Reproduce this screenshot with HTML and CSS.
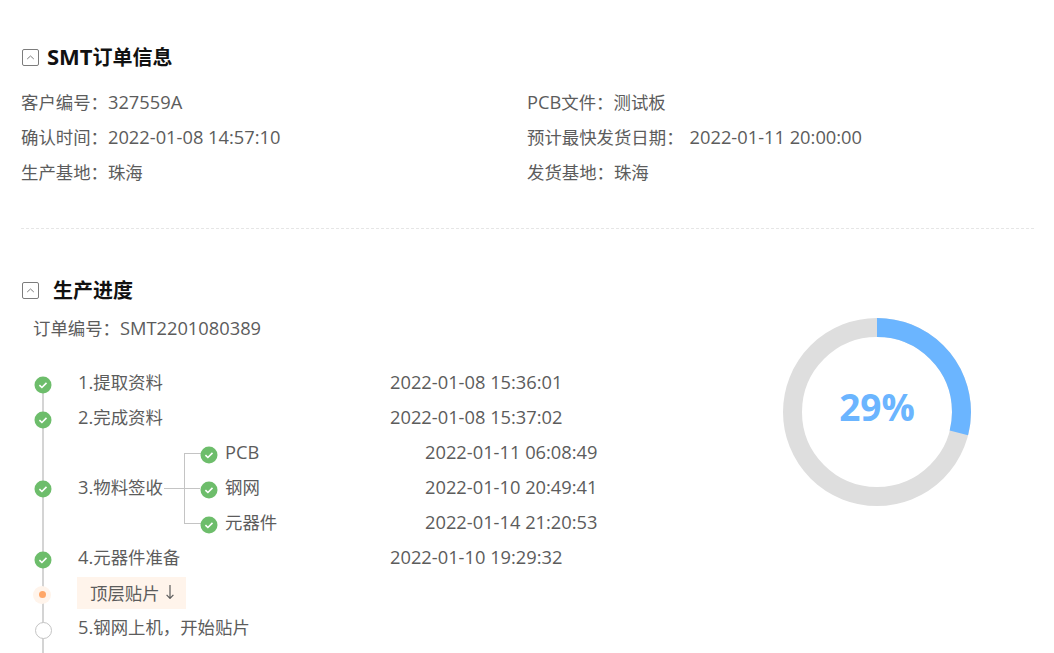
FILE: index.html
```html
<!DOCTYPE html>
<html lang="zh-CN">
<head>
<meta charset="utf-8">
<title>SMT订单信息</title>
<link rel="stylesheet" href="styles.css">
</head>
<body>
<main class="page">
  <section class="info">
    <h2 class="heading">
      <svg class="toggle" viewBox="0 0 17 17"><rect x=".5" y=".5" width="16" height="16" rx="1.5"/><path d="M5.2 10 8.5 7l3.3 3"/></svg>
      <span><span class="head-latin">SMT</span>订单信息</span>
    </h2>
    <div class="info-grid">
      <div class="field"><span class="key">客户编号：</span><span class="num">327559A</span></div>
      <div class="field"><span class="key"><span class="num">PCB</span>文件：</span>测试板</div>
      <div class="field"><span class="key">确认时间：</span><span class="num">2022-01-08 14:57:10</span></div>
      <div class="field"><span class="key wide">预计最快发货日期：</span><span class="num">2022-01-11 20:00:00</span></div>
      <div class="field"><span class="key">生产基地：</span>珠海</div>
      <div class="field"><span class="key">发货基地：</span>珠海</div>
    </div>
  </section>
  <hr class="divider">
  <section class="progress">
    <h2 class="heading heading-gap">
      <svg class="toggle" viewBox="0 0 17 17"><rect x=".5" y=".5" width="16" height="16" rx="1.5"/><path d="M5.2 10 8.5 7l3.3 3"/></svg>
      <span>生产进度</span>
    </h2>
    <div class="order-no">订单编号：<span class="num">SMT2201080389</span></div>
    <div class="body">
      <div class="timeline">
        <div class="row"><svg class="dot" viewBox="0 0 18 18"><circle cx="9" cy="9" r="8.5"/><path d="M5.4 9.2l2.5 2.3 4.6-4.6"/></svg><span class="label"><span class="num">1.</span>提取资料</span><span class="time num">2022-01-08 15:36:01</span></div>
        <div class="row"><svg class="dot" viewBox="0 0 18 18"><circle cx="9" cy="9" r="8.5"/><path d="M5.4 9.2l2.5 2.3 4.6-4.6"/></svg><span class="label"><span class="num">2.</span>完成资料</span><span class="time num">2022-01-08 15:37:02</span></div>
        <div class="group">
          <svg class="dot" viewBox="0 0 18 18"><circle cx="9" cy="9" r="8.5"/><path d="M5.4 9.2l2.5 2.3 4.6-4.6"/></svg>
          <span class="label"><span class="num">3.</span>物料签收</span>
          <div class="subs">
            <div class="sub"><svg class="dot" viewBox="0 0 18 18"><circle cx="9" cy="9" r="8.5"/><path d="M5.4 9.2l2.5 2.3 4.6-4.6"/></svg><span class="sub-label num">PCB</span><span class="time num">2022-01-11 06:08:49</span></div>
            <div class="sub"><svg class="dot" viewBox="0 0 18 18"><circle cx="9" cy="9" r="8.5"/><path d="M5.4 9.2l2.5 2.3 4.6-4.6"/></svg><span class="sub-label cjk">钢网</span><span class="time num">2022-01-10 20:49:41</span></div>
            <div class="sub"><svg class="dot" viewBox="0 0 18 18"><circle cx="9" cy="9" r="8.5"/><path d="M5.4 9.2l2.5 2.3 4.6-4.6"/></svg><span class="sub-label cjk">元器件</span><span class="time num">2022-01-14 21:20:53</span></div>
          </div>
        </div>
        <div class="row"><svg class="dot" viewBox="0 0 18 18"><circle cx="9" cy="9" r="8.5"/><path d="M5.4 9.2l2.5 2.3 4.6-4.6"/></svg><span class="label"><span class="num">4.</span>元器件准备</span><span class="time num">2022-01-10 19:29:32</span></div>
        <div class="row"><span class="current"></span><span class="tag">顶层贴片<svg class="arrow" viewBox="0 0 8 14"><path d="M4 0v13.4M.6 9.8 4 13.4l3.4-3.6"/></svg></span></div>
        <div class="row"><span class="pending"></span><span class="label"><span class="num">5.</span>钢网上机，开始贴片</span></div>
        <div class="row"></div>
      </div>
      <div class="ring">
        <svg viewBox="0 0 188 188"><circle class="ring-track" cx="94" cy="94" r="84.5"/><circle class="ring-value" cx="94" cy="94" r="84.5" pathLength="100" stroke-dasharray="29 71" transform="rotate(-90 94 94)"/></svg>
        <span class="ring-text">29%</span>
      </div>
    </div>
  </section>
</main>
</body>
</html>
```
FILE: styles.css
```css
* { box-sizing: border-box; }
html, body { margin: 0; height: 653px; overflow: hidden; background: #fff; }
body {
  font-family: "Open Sans", "Noto Sans CJK SC", sans-serif;
  font-size: 17.4px;
  color: #5c5c5c;
}
.num { font-size: 18.3px; line-height: 1; }
.head-latin { font-size: 22px; line-height: 1; }
.page { padding: 40px 20px 0 21px; }
.heading {
  display: flex;
  align-items: center;
  gap: 8px;
  margin: 0;
  height: 35px;
  font-size: 20px;
  font-weight: 700;
  color: #111;
}
.heading > span { margin-bottom: 2px; }
.heading-gap { gap: 14px; }
.toggle { width: 17px; height: 17px; margin-left: 1px; flex: none; fill: none; stroke: #7c7c7c; stroke-width: 1; }
.info-grid {
  display: grid;
  grid-template-columns: 506px 1fr;
  margin-top: 10px;
}
.field { height: 35px; line-height: 35px; white-space: nowrap; }
.key.wide { margin-right: 6px; }
.divider {
  margin: 38px 0 0;
  border: 0;
  border-top: 1px dashed #e6e6e6;
}
.progress { padding-top: 44px; }
.order-no { height: 35px; line-height: 33px; padding-left: 12px; margin-top: 4px; }
.body { display: flex; position: relative; margin-top: 16px; }
.timeline { position: relative; width: 700px; padding-top: 2px; }
.timeline::before {
  content: "";
  position: absolute;
  left: 21px;
  top: 18px;
  bottom: 0;
  width: 2px;
  background: #d4d4d4;
}
.row, .sub { display: flex; align-items: center; height: 35px; position: relative; white-space: nowrap; }
.dot { width: 18px; height: 18px; flex: none; position: relative; top: 2px; }
.dot circle { fill: #6dbd6b; }
.dot path { fill: none; stroke: #fff; stroke-width: 1.6; }
.row > .dot, .group > .dot { margin-left: 13px; }
.group > .dot { top: 1px; }
.label { margin-left: 26px; margin-bottom: 2px; width: 312px; }
.time { flex: none; margin-bottom: 2px; line-height: 1.4; }
.group { display: flex; align-items: center; height: 105px; position: relative; white-space: nowrap; }
.group .label { width: 122px; }
.subs { position: relative; }
.subs::before {
  content: "";
  position: absolute;
  left: -16px;
  top: 18px;
  bottom: 16px;
  width: 16px;
  border: 1px solid #c4c4c4;
  border-right: 0;
}
.subs::after {
  content: "";
  position: absolute;
  left: -36px;
  top: 53px;
  width: 36px;
  height: 1px;
  background: #c4c4c4;
}
.sub-label { margin-left: 7px; margin-bottom: 2px; width: 200px; line-height: 1.4; }
.sub-label.cjk { margin-bottom: 0; }
.current {
  position: relative;
  top: 2px;
  flex: none;
  width: 18px;
  height: 18px;
  margin-left: 12px;
  border-radius: 50%;
  background: #fff4eb;
}
.current::after {
  content: "";
  position: absolute;
  left: 5.5px;
  top: 5.5px;
  width: 7px;
  height: 7px;
  border-radius: 50%;
  background: #ffa768;
}
.tag {
  display: flex;
  align-items: center;
  gap: 6px;
  margin-left: 26px;
  padding: 0 13px 2px;
  height: 32px;
  margin-top: 1px;
  width: 109px;
  background: #fff4eb;
  color: #5c5c5c;
}
.arrow { flex: none; width: 8px; height: 14px; fill: none; stroke: #5c5c5c; stroke-width: 1.2; }
.pending {
  position: relative;
  top: 3px;
  flex: none;
  width: 17px;
  height: 17px;
  margin-left: 14px;
  border-radius: 50%;
  border: 1px solid #c4c4c4;
  background: #fff;
}
.pending + .label { margin-left: 26px; }
.ring {
  position: absolute;
  left: 762px;
  top: -45px;
  width: 188px;
  height: 188px;
  display: flex;
  align-items: center;
  justify-content: center;
}
.ring svg { position: absolute; inset: 0; }
.ring-track, .ring-value { fill: none; stroke-width: 19; }
.ring-track { stroke: #dedede; }
.ring-value { stroke: #6bb5ff; }
.ring-text { position: relative; margin-bottom: 12px; font-size: 37px; font-weight: 700; color: #6bb5ff; }
```
